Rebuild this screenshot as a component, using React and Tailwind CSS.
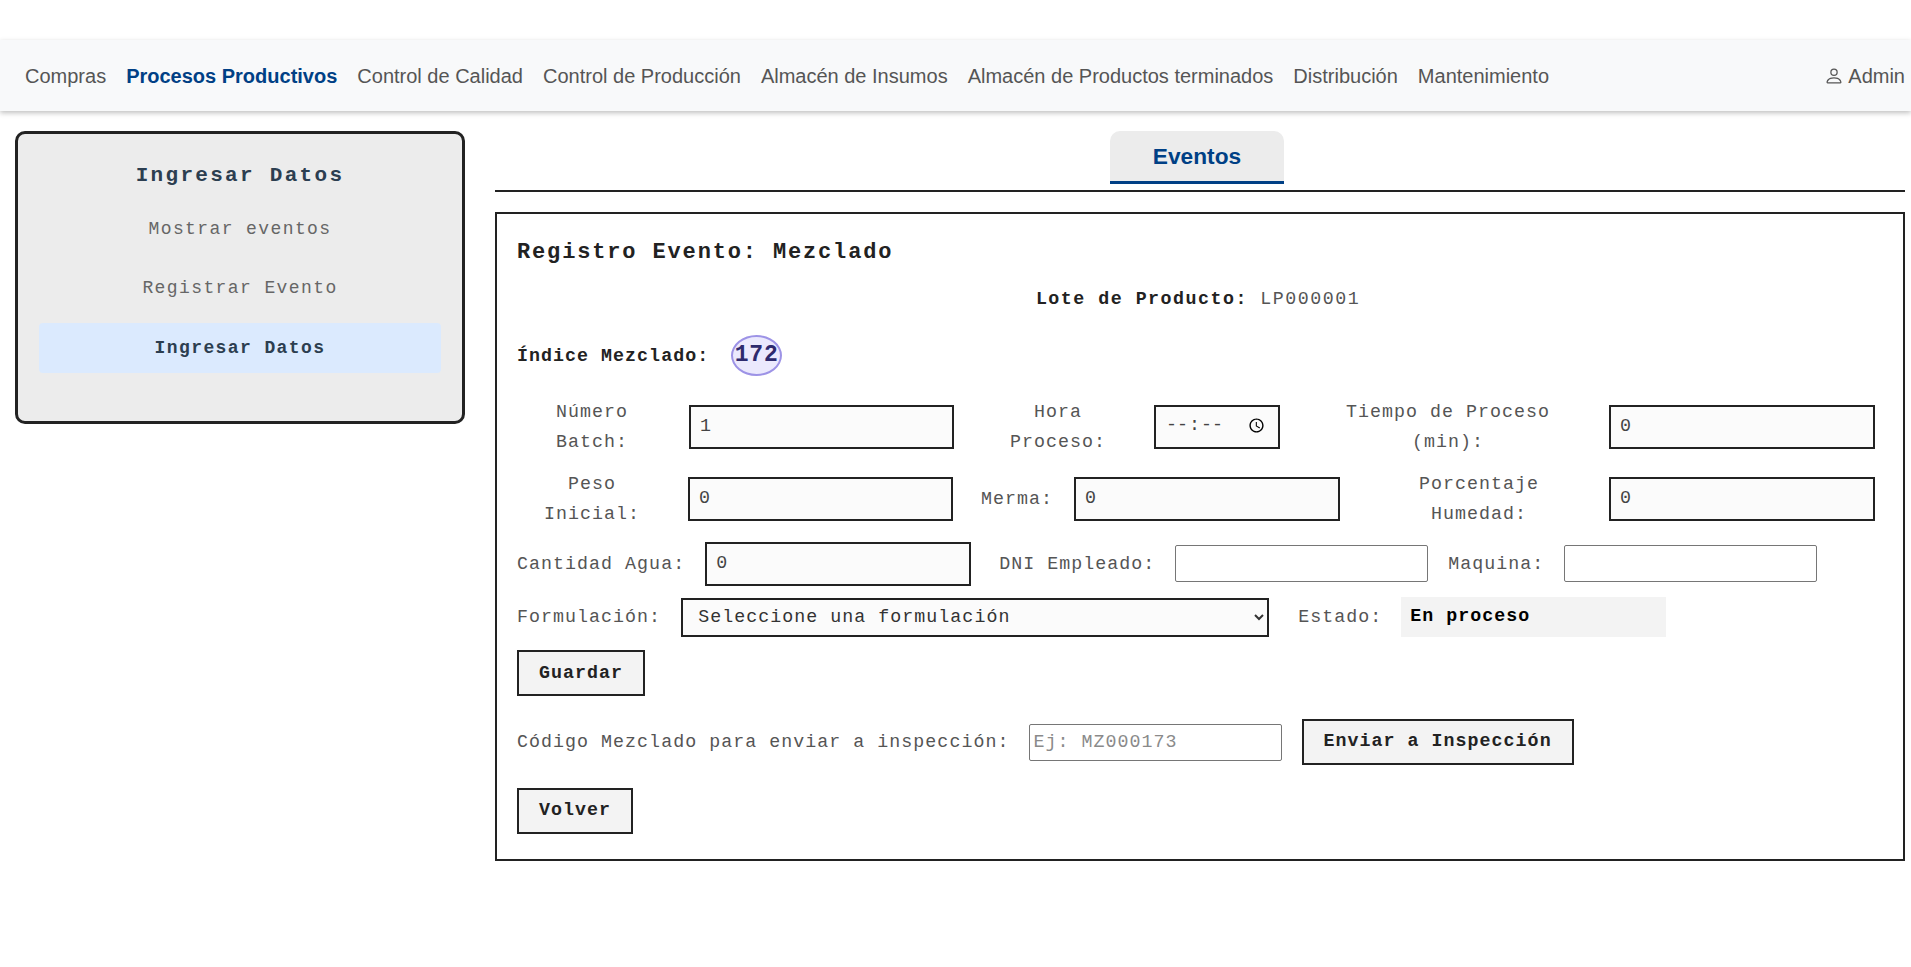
import React from "react";
import { BsPerson } from "react-icons/bs";

const navItems = ["Compras", "Procesos Productivos", "Control de Calidad", "Control de Producción", "Almacén de Insumos", "Almacén de Productos terminados", "Distribución", "Mantenimiento"];

const boxed = "h-[44px] border-2 border-[#222] bg-[#fbfbfb] pb-[3px] pl-[9px] text-[#444] outline-none";
const thin = "h-[37px] rounded-[2px] border border-[#767676] bg-white px-[3px] outline-none";
const btn = "h-[46px] border-2 border-[#222] bg-[#f3f3f3] pr-[20px] font-bold text-[#222]";

function Label({ className, children }) {
  return <label className={"shrink-0 text-center leading-[30px] text-[#555] " + className}>{children}</label>;
}

export default function App() {
  return (
    <div lang="es-ES" className="min-h-[967px] bg-white pt-[40px] font-['Liberation_Sans',Arial,sans-serif]">
      <nav className="flex h-[71px] items-center justify-between bg-[#f8f9fa] pl-[25px] pr-[6px] text-[20px] text-[#555] shadow-[0_2px_5px_rgba(0,0,0,0.25)]">
        <ul className="flex gap-[20px]">
          {navItems.map((n, i) => (
            <li key={n} className={i === 1 ? "font-bold text-[#004085]" : ""}>{n}</li>
          ))}
        </ul>
        <div className="flex items-center gap-[4px]">
          <BsPerson size={20} />
          <span>Admin</span>
        </div>
      </nav>

      <div className="flex items-start pl-[15px] pr-[6px] pt-[20px] font-['Liberation_Mono',monospace] text-[18.3px] tracking-[1.04px]">
        <aside className="flex h-[293px] w-[450px] shrink-0 flex-col rounded-[10px] border-[3px] border-[#222] bg-[#ececec] px-[21px] pt-[23px]">
          <h2 className="h-[47px] text-center text-[21px] font-bold leading-[38px] tracking-[2.3px] text-[#2c3e50]">Ingresar Datos</h2>
          <div className="flex flex-col gap-[9px] text-[18px] tracking-[1.4px]">
            <a className="flex h-[50px] items-center justify-center text-[#666]">Mostrar eventos</a>
            <a className="flex h-[50px] items-center justify-center text-[#666]">Registrar Evento</a>
            <a className="mt-[1px] flex h-[50px] items-center justify-center rounded-[4px] bg-[#dbeafe] font-bold text-[#2c3e50]">Ingresar Datos</a>
          </div>
        </aside>

        <main className="ml-[30px] min-w-0 flex-1">
          <div className="flex justify-center border-b-2 border-[#222] pb-[6px] pr-[6px]">
            <button className="h-[53px] w-[174px] rounded-t-[10px] border-b-[3px] border-[#004085] bg-[#ececec] font-['Liberation_Sans',Arial,sans-serif] text-[22.7px] font-bold tracking-normal text-[#004085]">Eventos</button>
          </div>

          <section className="mt-[20px] flex h-[649px] flex-col border-2 border-[#222] pl-[20px] pr-[24px] pt-[24px] text-[#222]">
            <h3 className="h-[30px] text-[22px] font-bold leading-[30px] tracking-[1.85px]">Registro Evento: Mezclado</h3>
            <p className="mt-[16px] h-[30px] text-center leading-[30px] tracking-[1.5px]">
              <b>Lote de Producto:</b> <span className="text-[#555]">LP000001</span>
            </p>
            <div className="mt-[21px] flex h-[41px] items-center font-bold">
              <span className="pt-[2px]">Índice Mezclado:</span>
              <span className="ml-[22px] flex h-[41px] w-[51px] items-center justify-center rounded-[50%] border-2 border-[#9d93e6] bg-[#ebe9fd] text-[23px] tracking-[0.8px] text-[#2e2a6e]">172</span>
            </div>

            <div className="mt-[21px] flex h-[60px] items-center">
              <Label className="w-[150px]">Número Batch:</Label>
              <input className={boxed + " ml-[22px] w-[265px]"} defaultValue="1" />
              <Label className="ml-[34px] w-[140px]">Hora Proceso:</Label>
              <input type="time" className={boxed + " ml-[26px] w-[126px] pr-[10px] [&::-webkit-calendar-picker-indicator]:h-[17px] [&::-webkit-calendar-picker-indicator]:w-[17px] [&::-webkit-datetime-edit-ampm-field]:hidden"} />
              <Label className="ml-[53px] w-[230px]">Tiempo de Proceso (min):</Label>
              <input className={boxed + " ml-[46px] w-[266px]"} defaultValue="0" />
            </div>

            <div className="mt-[12px] flex h-[60px] items-center">
              <Label className="w-[150px]">Peso Inicial:</Label>
              <input className={boxed + " ml-[21px] w-[265px]"} defaultValue="0" />
              <Label className="ml-[28px] w-auto">Merma:</Label>
              <input className={boxed + " ml-[21px] w-[266px]"} defaultValue="0" />
              <Label className="ml-[59px] w-[160px]">Porcentaje Humedad:</Label>
              <input className={boxed + " ml-[50px] w-[266px]"} defaultValue="0" />
            </div>

            <div className="mt-[13px] flex h-[44px] items-center">
              <Label className="">Cantidad Agua:</Label>
              <input className={boxed + " ml-[20px] w-[266px]"} defaultValue="0" />
              <Label className="ml-[28px]">DNI Empleado:</Label>
              <input className={thin + " mb-[2px] ml-[20px] w-[253px]"} />
              <Label className="ml-[20px]">Maquina:</Label>
              <input className={thin + " mb-[2px] ml-[20px] w-[253px]"} />
            </div>

            <div className="mt-[11px] flex h-[40px] items-center">
              <Label>Formulación:</Label>
              <select className="ml-[20px] h-[39px] w-[588px] border-2 border-[#222] bg-[#fbfbfb] pl-[11px] text-[#333] outline-none">
                <option>Seleccione una formulación</option>
              </select>
              <Label className="ml-[29px]">Estado:</Label>
              <div className="ml-[19px] flex h-[40px] w-[265px] items-center bg-[#f3f3f3] pl-[9px] font-bold text-black">En proceso</div>
            </div>

            <div className="mt-[13px]">
              <button className={btn + " pl-[20px] pt-[2px]"}>Guardar</button>
            </div>

            <div className="mt-[23px] flex h-[46px] items-center">
              <Label>Código Mezclado para enviar a inspección:</Label>
              <input className={thin + " ml-[20px] h-[35px] w-[253px] placeholder:text-[#8a8a8a]"} placeholder="Ej: MZ000173" />
              <button className={btn + " ml-[20px] pl-[19px]"}>Enviar a Inspección</button>
            </div>

            <div className="mt-[23px]">
              <button className={btn + " pl-[20px]"}>Volver</button>
            </div>
          </section>
        </main>
      </div>
    </div>
  );
}
